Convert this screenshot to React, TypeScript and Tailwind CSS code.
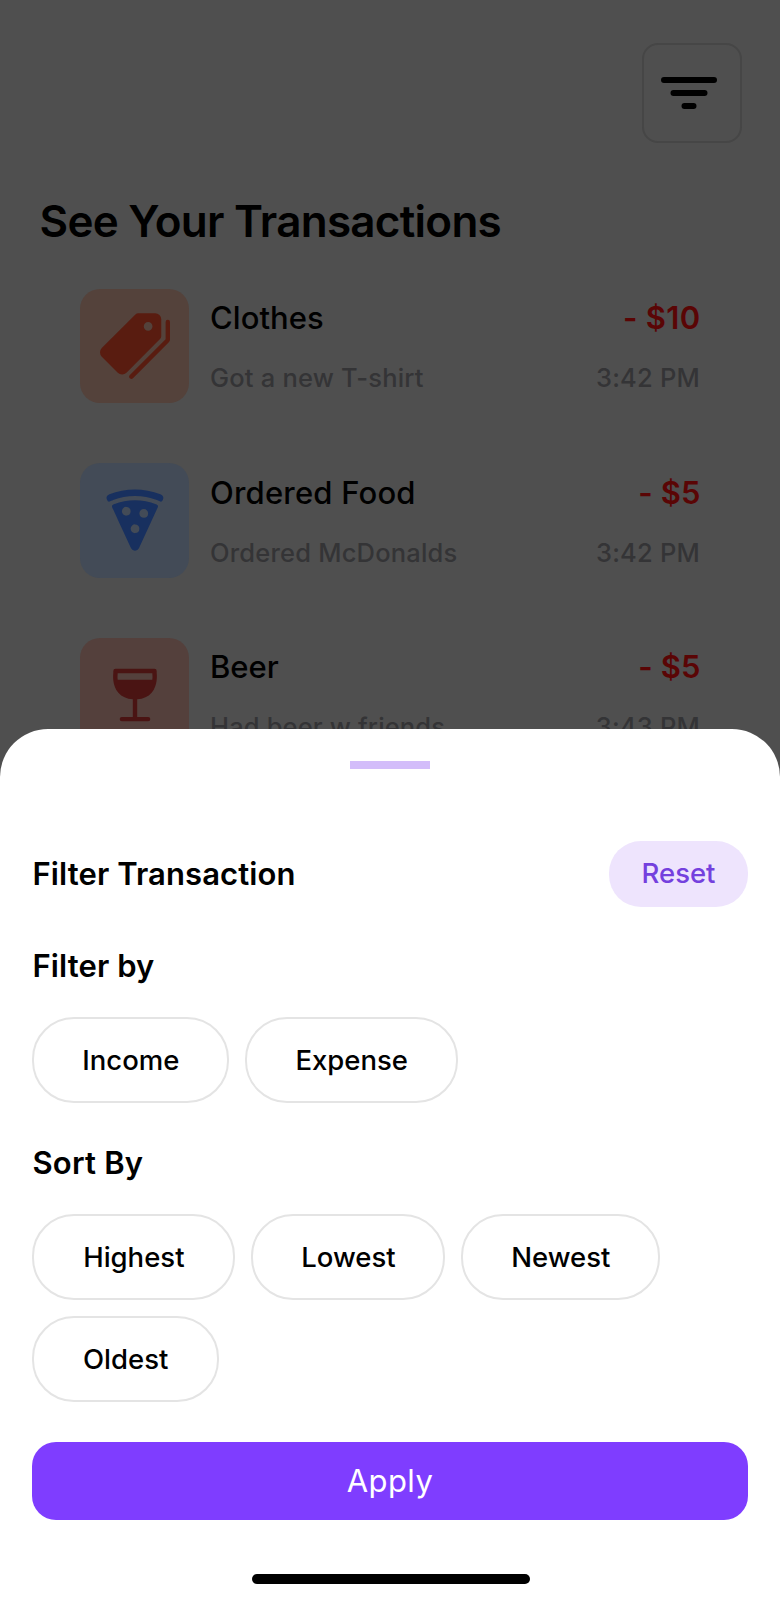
import type { ReactNode } from "react";
import { IoPizza, IoPricetags, IoWine } from "react-icons/io5";

type Transaction = {
  title: string;
  titleClass: string;
  note: string;
  noteClass: string;
  amount: string;
  amountClass: string;
  time: string;
  tileClass: string;
  icon: ReactNode;
};

const transactions: Transaction[] = [
  {
    title: "Clothes",
    titleClass: "tracking-[0.05px]",
    note: "Got a new T-shirt",
    noteClass: "tracking-[0.2px]",
    amount: "- $10",
    amountClass: "tracking-[0.3px]",
    time: "3:42 PM",
    tileClass: "bg-[#54423b] text-[#591c10]",
    icon: <IoPricetags size={70} />,
  },
  {
    title: "Ordered Food",
    titleClass: "tracking-[0.2px]",
    note: "Ordered McDonalds",
    noteClass: "tracking-[0.2px]",
    amount: "- $5",
    amountClass: "tracking-[0.1px]",
    time: "3:42 PM",
    tileClass: "bg-[#434b57] text-[#18305f]",
    icon: <IoPizza size={70} />,
  },
  {
    title: "Beer",
    titleClass: "tracking-[0px]",
    note: "Had beer w friends",
    noteClass: "tracking-[0.15px]",
    amount: "- $5",
    amountClass: "tracking-[0.1px]",
    time: "3:43 PM",
    tileClass: "bg-[#54403c] text-[#4a1413]",
    icon: <IoWine size={70} />,
  },
];

function FilterIcon() {
  return (
    <svg width="56" height="34" viewBox="0 0 56 34" fill="none" stroke="#000" strokeWidth="6" strokeLinecap="round">
      <path d="M3 4h50M12.5 17h31M23.5 30h9" />
    </svg>
  );
}

function Row({ item }: { item: Transaction }) {
  return (
    <li className="flex h-[114.5px] gap-[21px]">
      <div className={`flex w-[109px] shrink-0 items-center justify-center rounded-[20px] ${item.tileClass}`}>
        {item.icon}
      </div>
      <div className="flex flex-1 flex-col gap-5 pt-[9.5px]">
        <div className="flex justify-between text-[31px] leading-10">
          <span className={`font-medium ${item.titleClass}`}>{item.title}</span>
          <span className={`-mr-[0.5px] font-semibold text-[#5a0505] ${item.amountClass}`}>{item.amount}</span>
        </div>
        <div className="flex justify-between text-[25.5px] leading-10 text-[#343436]">
          <span className={`font-medium ${item.noteClass}`}>{item.note}</span>
          <span className="font-medium tracking-[0.2px]">{item.time}</span>
        </div>
      </div>
    </li>
  );
}

function Chip({ label, className }: { label: string; className: string }) {
  return (
    <button
      className={`flex h-[86px] items-center justify-center rounded-[42px] border-2 border-[#e4e4e4] pb-px text-[27.5px] font-medium leading-10 ${className}`}
    >
      {label}
    </button>
  );
}

export default function App() {
  return (
    <div className="relative h-[1600px] w-[780px] overflow-hidden bg-[#4f4f4f] font-['Inter',sans-serif] text-black">
      <header className="flex justify-end pr-[38px] pt-[43px]">
        <button className="flex size-[100px] items-center justify-center rounded-[16px] border-2 border-[#464646] pr-[7px] pb-[1px]">
          <FilterIcon />
        </button>
      </header>
      <h1 className="mt-[50px] pl-[39.5px] text-[44px] font-semibold leading-[56px] tracking-[-0.73px]">
        See Your Transactions
      </h1>
      <ul className="mt-[39.5px] flex flex-col gap-[60.2px] pl-[80px] pr-[80px]">
        {transactions.map((item) => (
          <Row key={item.title} item={item} />
        ))}
      </ul>

      <section className="absolute inset-x-0 bottom-0 flex h-[871px] flex-col rounded-t-[48px] bg-white px-8 pt-8">
        <div className="h-2 w-20 self-center bg-[#d3bdfa]" />
        <div className="mt-[72px] flex h-[66px] items-center justify-between">
          <h2 className="pl-[0.5px] text-[31px] font-semibold leading-10 tracking-[0.1px]">Filter Transaction</h2>
          <button className="h-[66px] w-[139px] rounded-[32px] bg-[#eee4fd] text-[27.5px] font-medium text-[#7440de]">
            Reset
          </button>
        </div>
        <h3 className="mt-[39px] pl-[0.5px] text-[31px] font-semibold leading-10 tracking-[0.1px]">Filter by</h3>
        <div className="mt-[31px] flex gap-4 pl-[0.2px]">
          <Chip label="Income" className="w-[197.3px]" />
          <Chip label="Expense" className="w-[212.5px]" />
        </div>
        <h3 className="mt-[40px] pl-[0.5px] text-[31px] font-semibold leading-10 tracking-[0.2px]">Sort By</h3>
        <div className="mt-[31px] flex flex-wrap gap-4 pl-[0.2px]">
          <Chip label="Highest" className="w-[203.3px]" />
          <Chip label="Lowest" className="w-[193.9px]" />
          <Chip label="Newest" className="w-[199px]" />
          <Chip label="Oldest" className="w-[187px]" />
        </div>
        <button className="mt-10 h-[78px] shrink-0 rounded-[24px] bg-[#7f3dff] text-[31px] leading-10 tracking-[0.4px] text-white">
          Apply
        </button>
        <div className="mt-[54px] ml-px h-[10px] w-[278px] shrink-0 self-center rounded-full bg-black" />
      </section>
    </div>
  );
}
